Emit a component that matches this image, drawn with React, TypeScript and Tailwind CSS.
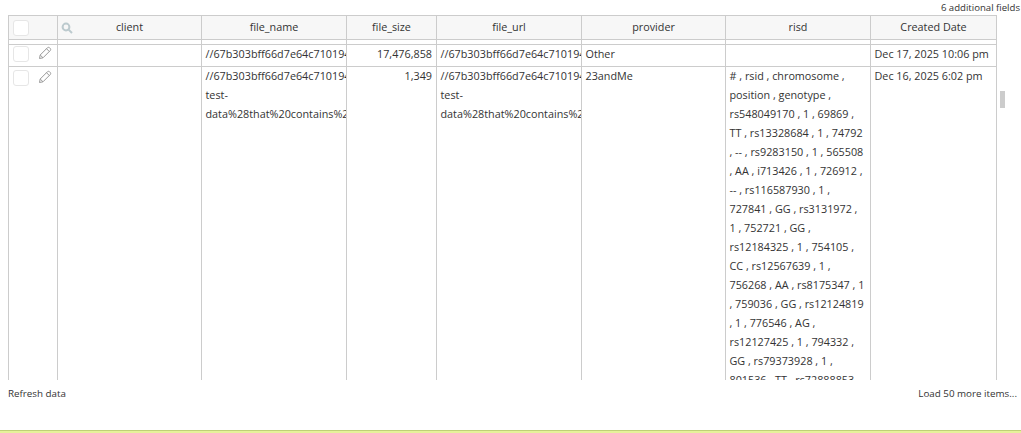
const risd = ["# , rsid , chromosome ,","position , genotype ,","rs548049170 , 1 , 69869 ,","TT , rs13328684 , 1 , 74792",", -- , rs9283150 , 1 , 565508",", AA , i713426 , 1 , 726912 ,","-- , rs116587930 , 1 ,","727841 , GG , rs3131972 ,","1 , 752721 , GG ,","rs12184325 , 1 , 754105 ,","CC , rs12567639 , 1 ,","756268 , AA , rs8175347 , 1",", 759036 , GG , rs12124819",", 1 , 776546 , AG ,","rs12127425 , 1 , 794332 ,","GG , rs79373928 , 1 ,","801536 , TT , rs72888853"];
const widths = ["w-[145px]","w-[90px]","w-[145px]","w-[144px]","w-[145px]","w-[126px]"];
const heads = ["file_name","file_size","file_url","provider","risd","Created Date"];

function Pencil() {
  return (
    <svg width="14" height="14" viewBox="0 0 14 14" fill="none" stroke="#9a9a9a" strokeWidth="1">
      <path d="M1.5 12.5 L2.2 9 L9.5 1.7 Q10.5 0.9 11.5 1.7 L12.3 2.5 Q13.1 3.5 12.3 4.5 L5 11.8 Z M2.2 9 L5 11.8 M8.5 2.7 L11.3 5.5" />
    </svg>
  );
}
function Check() {
  return <div className="w-4 h-4 border border-[#e6e6e6] rounded-[3px] bg-white" />;
}
function Cell({ w, children, right }: { w: string; children?: React.ReactNode; right?: boolean }) {
  return (
    <div className={`${w} shrink-0 border-r border-[#cccccc] pl-[3.5px] pr-1 overflow-hidden whitespace-nowrap ${right ? "text-right" : ""}`}>
      <div className="-mt-px">{children}</div>
    </div>
  );
}

export default function App() {
  return (
    <div className="w-[1021px] h-[433px] bg-white overflow-hidden relative flex flex-col text-[10.8px] leading-[19px] text-[#333333] [font-family:'Open_Sans',sans-serif]">
      <div className="h-[15px] text-right pr-[1px] text-[9.6px] leading-[15px] text-[#333333]">6 additional fields</div>
      <div className="h-[365px] ml-2 w-[989px] overflow-hidden border-l border-[#cccccc]">
        <div className="flex h-[25px] border-t border-b border-[#cccccc] bg-[#f7f7f7] text-center leading-[22px]">
          <div className="w-[49px] shrink-0 border-r border-[#cccccc] pl-1 pt-[4px]"><Check /></div>
          <div className="w-[144px] shrink-0 border-r border-[#cccccc] relative">
            <svg className="absolute left-[3px] top-[6px]" width="12" height="12" viewBox="0 0 12 12" fill="none" stroke="#bccace" strokeWidth="2"><circle cx="5" cy="5" r="3.4" /><path d="M7.6 7.6 L11 11" /></svg>
            client
          </div>
          {heads.map((h, i) => (
            <div key={h} className={`${widths[i]} shrink-0 border-r border-[#cccccc] overflow-hidden whitespace-nowrap`}>{h}</div>
          ))}
        </div>
        <div className="h-[5px] border-b border-[#cccccc] flex">
          <div className="w-[49px] border-r border-[#cccccc]" />
          <div className="w-[144px] border-r border-[#cccccc]" />
          {widths.map((w, i) => <div key={i} className={`${w} border-r border-[#cccccc]`} />)}
        </div>
        <div className="flex h-[22px] border-b border-[#cccccc]">
          <div className="w-[49px] shrink-0 border-r border-[#cccccc] pl-1 pt-[1px] pr-[5px] flex justify-between"><Check /><Pencil /></div>
          <div className="w-[144px] shrink-0 border-r border-[#cccccc]" />
          <Cell w={widths[0]}>//67b303bff66d7e64c710194</Cell>
          <Cell w={widths[1]} right>17,476,858</Cell>
          <Cell w={widths[2]}>//67b303bff66d7e64c710194</Cell>
          <Cell w={widths[3]}>Other</Cell>
          <Cell w={widths[4]} />
          <Cell w={widths[5]}>Dec 17, 2025 10:06 pm</Cell>
        </div>
        <div className="flex h-[400px]">
          <div className="w-[49px] shrink-0 border-r border-[#cccccc] pl-1 pt-[3px] pr-[5px] flex justify-between items-start"><Check /><Pencil /></div>
          <div className="w-[144px] shrink-0 border-r border-[#cccccc]" />
          <Cell w={widths[0]}><div>//67b303bff66d7e64c710194</div><div>test-</div><div>data%28that%20contains%2</div></Cell>
          <Cell w={widths[1]} right>1,349</Cell>
          <Cell w={widths[2]}><div>//67b303bff66d7e64c710194</div><div>test-</div><div>data%28that%20contains%2</div></Cell>
          <Cell w={widths[3]}>23andMe</Cell>
          <Cell w={widths[4]}>{risd.map((r) => <div key={r}>{r}</div>)}</Cell>
          <Cell w={widths[5]}>Dec 16, 2025 6:02 pm</Cell>
        </div>
      </div>
      <div className="flex justify-between pl-2 pr-[4px] h-[28px] pt-[4px] text-[9.8px] leading-[19px] text-[#333333]">
        <span>Refresh data</span>
        <span>Load 50 more items...</span>
      </div>
      <div className="mt-auto h-[3px] border-t border-[#c0d078] bg-[#e6f29a]" />
      <div className="absolute left-[1000px] top-[91px] w-[5px] h-[17px] bg-[#cccccc]" />
    </div>
  );
}
